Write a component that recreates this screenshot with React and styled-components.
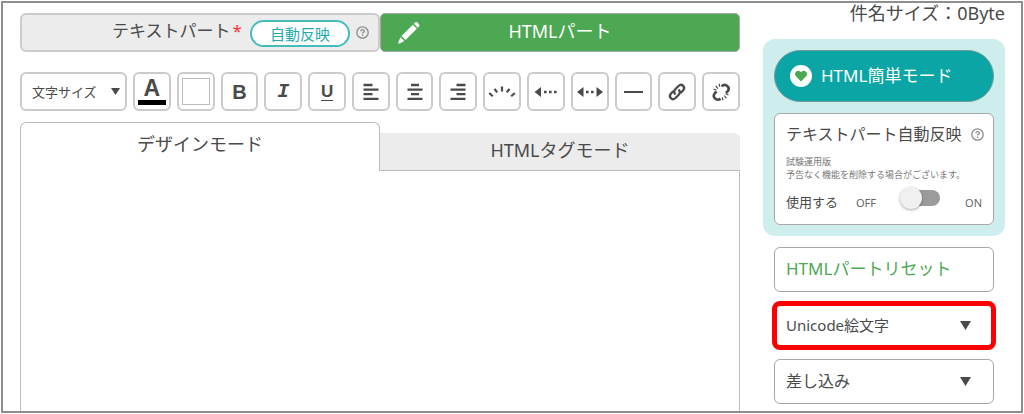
import React, { useState } from "react";
import styled, { createGlobalStyle } from "styled-components";
import { FaHeart } from "react-icons/fa";

const ink = "#4a4a4a";
const line = "#cbcbcb";
const darkLine = "#a8a8a8";
const teal = "#0ba5a5";
const green = "#4ca852";

const GlobalStyle = createGlobalStyle`
  *, *::before, *::after { box-sizing: border-box; }
  body {
    margin: 0;
    padding: 1px;
    background: #fff;
    color: ${ink};
    font-family: "Noto Sans", "Noto Sans CJK JP", sans-serif;
    font-size: 18px;
    line-height: 24px;
  }
  button, select { font: inherit; color: inherit; margin: 0; }
  button { cursor: pointer; }
  svg { display: block; }
`;

const Frame = styled.div`
  display: grid;
  grid-template-columns: minmax(0, 1fr) 242px;
  column-gap: 23px;
  padding: 0 16px 0 17px;
  border: 2px solid #8e8e8e;
`;

const Main = styled.main`
  display: flex;
  flex-direction: column;
  padding-top: 10px;
`;

const PartTabs = styled.div`
  display: grid;
  grid-template-columns: 1fr 1fr;
  height: 39px;
`;

const PartTab = styled.div`
  display: flex;
  align-items: center;
  justify-content: flex-end;
  padding: 0 9px;
  border: 2px solid ${line};
  border-radius: 6px;
  background: #ececec;
`;

const PlainButton = styled.button`
  padding: 0;
  border: 0;
  background: none;
`;

const PartName = styled(PlainButton)`
  padding-bottom: 3px;
  font-size: 17px;
`;

const Required = styled.span`
  margin-left: 2px;
  color: #f33;
`;

const Badge = styled.button`
  height: 27px;
  margin: 2px 6px 0 8px;
  padding: 0 18px;
  border: 2px solid #45bcbc;
  border-radius: 14px;
  background: #fff;
  color: #1fabab;
  font-size: 15px;
  line-height: 20px;
`;

const HelpButton = styled(PlainButton)`
  flex: none;
  color: #8c8c8c;
`;

const ActivePart = styled.button`
  display: grid;
  grid-template-columns: 24px 1fr 24px;
  align-items: center;
  padding: 0 16px;
  border: 1px solid ${darkLine};
  border-radius: 5px;
  background: ${green};
  color: #fff;
`;

const PartLabel = styled.span`
  padding-bottom: 3px;
`;

const Toolbar = styled.div`
  display: flex;
  gap: 6px;
  height: 39px;
  margin-top: 20px;
`;

const ToolButton = styled.button`
  display: flex;
  flex: 1 1 0;
  min-width: 0;
  align-items: center;
  justify-content: center;
  padding: 0;
  border: 2px solid ${line};
  border-radius: 6px;
  background: #fff;
`;

const BoldMark = styled.span`
  font: bold 20px/24px "Liberation Sans", sans-serif;
`;

const ItalicMark = styled.span`
  font: italic bold 20px/24px "Liberation Mono", monospace;
`;

const UnderlineMark = styled.span`
  width: 12px;
  border-bottom: 1px solid ${ink};
  font: bold 17px/17px "Liberation Sans", sans-serif;
`;

const InkMark = styled.span`
  width: 28px;
  margin-bottom: 1px;
  border-bottom: 5px solid #000;
  font: bold 23px/23px "Liberation Sans", sans-serif;
`;

const Swatch = styled.span`
  width: 28px;
  height: 27px;
  border: 1px solid #bcbcbc;
`;

const SelectBox = styled.div`
  display: grid;
  align-items: center;
  width: ${(p) => p.$width};
  height: ${(p) => p.$height};
  border: ${(p) => (p.$soft ? `2px solid ${line}` : `1px solid ${darkLine}`)};
  border-radius: 6px;
  background: #fff;
  outline: ${(p) => (p.$marked ? "5px solid #f00" : "none")};
  outline-offset: -3px;

  select {
    grid-area: 1 / 1;
    width: 100%;
    height: 100%;
    padding: 0 0 ${(p) => (p.$soft ? "0 10px" : "2px 11px")};
    border: 0;
    background: none;
    appearance: none;
    font-size: ${(p) => p.$size};
  }
  svg {
    grid-area: 1 / 1;
    justify-self: end;
    margin-right: ${(p) => (p.$soft ? "5px" : "22px")};
    pointer-events: none;
  }
`;

const ModeTabs = styled.div`
  display: grid;
  grid-template-columns: 1fr 1fr;
  align-items: end;
  margin-top: 11px;
`;

const ModeTab = styled.button`
  height: ${(p) => (p.$active ? "49px" : "38px")};
  padding: ${(p) => (p.$active ? "0 0 6px" : "0 0 4px")};
  border: 1px solid #bcbcbc;
  border-width: ${(p) => (p.$active ? "1px 1px 0" : "0 0 1px")};
  border-radius: ${(p) => (p.$active ? "6px 6px 0 0" : "0 6px 0 0")};
  background: ${(p) => (p.$active ? "#fff" : "#ececec")};
`;

const Editor = styled.div`
  flex: 1;
  min-height: 200px;
  border: solid #bcbcbc;
  border-width: 0 1px;
  outline: none;
`;

const Sidebar = styled.aside`
  padding-bottom: 7px;
`;

const SubjectSize = styled.p`
  margin: 0 0 16px;
  line-height: 20px;
  text-align: right;
  white-space: nowrap;
`;

const EasyPanel = styled.section`
  display: grid;
  gap: 11px;
  padding: 11px;
  border-radius: 12px;
  background: #cdeeec;
`;

const EasyButton = styled.button`
  display: flex;
  align-items: center;
  gap: 9px;
  height: 52px;
  padding: 0 15px;
  border: 1px solid #6f9c9c;
  border-radius: 26px;
  background: ${teal};
  color: #fff;
  font-size: 17px;
`;

const HeartDisc = styled.span`
  display: grid;
  place-items: center;
  width: 22px;
  height: 22px;
  border-radius: 50%;
  background: #fff;
  color: ${green};
`;

const ReflectCard = styled.div`
  height: 112px;
  padding: 8px 9px 0 11px;
  border: 1px solid ${darkLine};
  border-radius: 6px;
  background: #fff;
`;

const CardHeading = styled.div`
  display: flex;
  align-items: center;
  justify-content: space-between;
  font-size: 16px;
  white-space: nowrap;
`;

const Note = styled.p`
  margin: 9px 0 0;
  color: #777;
  font-size: 9px;
  line-height: 13px;
  white-space: nowrap;
`;

const SwitchRow = styled.label`
  display: flex;
  align-items: center;
  margin-top: 9px;
  font-size: 13px;
  line-height: 20px;
`;

const StateText = styled.span`
  margin-left: ${(p) => (p.$last ? "auto" : "18px")};
  padding-top: 2px;
  padding-right: ${(p) => (p.$last ? "2px" : "0")};
  color: #666;
  font-size: 11px;
`;

const Switch = styled.input`
  appearance: none;
  display: flex;
  align-items: center;
  width: 40px;
  height: 16px;
  margin: 0 0 8px 24px;
  border-radius: 8px;
  background: linear-gradient(#9b9b9b, #9b9b9b) right / 32px 16px no-repeat;
  cursor: pointer;

  &::before {
    content: "";
    width: 22px;
    height: 22px;
    flex: none;
    border-radius: 50%;
    background: #f0f0f0;
    box-shadow: 0 1px 3px rgba(0, 0, 0, 0.35);
  }
  &:checked { justify-content: flex-end; }
`;

const SideActions = styled.div`
  display: grid;
  gap: 11px;
  padding: 11px 11px 0;
`;

const ResetButton = styled.button`
  height: 45px;
  padding: 0 11px 2px;
  border: 1px solid ${darkLine};
  border-radius: 6px;
  background: #fff;
  color: ${green};
  font-size: 17px;
  text-align: left;
`;

const Help = () => (
  <HelpButton type="button" aria-label="ヘルプ">
    <svg width="13" height="13" viewBox="0 0 13 13" fill="none" stroke="currentColor" strokeWidth="1.3">
      <circle cx="6.5" cy="6.5" r="5.7" />
      <path d="M4.8 5.2c0-2.2 3.5-2.2 3.5-.1 0 1.2-1.7 1.3-1.7 2.5M6.6 8.6v1.3" />
    </svg>
  </HelpButton>
);

const Caret = ({ size }) => (
  <svg width={size} height={size - 2} viewBox="0 0 10 8" preserveAspectRatio="none" fill={ink}>
    <path d="M0 0h10L5 8z" />
  </svg>
);

const Pencil = () => (
  <svg width="24" height="24" viewBox="0 0 24 24" fill="#fff">
    <path d="M4.500 15 15.800 3.700l4 4L8.500 19z" />
    <path d="M3.500 16.200 7.300 20l-4.500 2.500c-1 .5-2-.5-1.500-1.500z" />
    <path d="m16.800 2.700 1-1a2 2 0 0 1 2.800 0l1.200 1.200a2 2 0 0 1 0 2.800l-1 1z" />
  </svg>
);

const Strokes = ({ d, width = 2, children }) => (
  <svg width="30" height="24" viewBox="0 0 30 24" fill="none" stroke={ink} strokeWidth={width}>
    <path d={d} />
    {children}
  </svg>
);

const tools = [
  ["文字色", <InkMark>A</InkMark>],
  ["背景色", <Swatch />],
  ["太字", <BoldMark>B</BoldMark>],
  ["斜体", <ItalicMark>I</ItalicMark>],
  ["下線", <UnderlineMark>U</UnderlineMark>],
  ["左揃え", <Strokes width={2.3} d="M7.500 5h9M7.500 9.600h15M7.500 14.200h9M7.500 18.800h15" />],
  ["中央揃え", <Strokes width={2.3} d="M11 5h8M7.500 9.600h15M11 14.200h8M7.500 18.800h15" />],
  ["右揃え", <Strokes width={2.3} d="M13.500 5h9M7.500 9.600h15M13.500 14.200h9M7.500 18.800h15" />],
  ["点滅", <Strokes width={2.2} d="M2.200 13l3.600 3.200M7.500 8.800l2.700 3.600M15 6.500v5M22.500 8.800l-2.700 3.600M27.800 13l-3.600 3.200" />],
  ["スクロール", <Strokes width={2.4} d="M13 12h2.600M18 12h2.600M23 12h2.600"><path d="M3.500 12l6.500-5v10z" fill={ink} stroke="none" /></Strokes>],
  ["往復スクロール", <Strokes width={2.4} d="M11 12h2.600M16 12h2.600"><path d="M2 12l6.500-5v10zM28 12l-6.500-5v10z" fill={ink} stroke="none" /></Strokes>],
  ["水平線", <Strokes d="M6 12h19" />],
  ["リンク", (
    <Strokes width={2.3} d="M13.500 14.500c-2-2-1.500-4 0-5.500l3-3c3.500-3 7.500 1 4.500 4.500l-2.500 2.500M16.500 9.500c2 2 1.500 4 0 5.500l-3 3c-3.500 3-7.500-1-4.500-4.500l2.500-2.500" />
  )],
  ["リンク解除", (
    <Strokes width={2.6} d="M15.500 6.500c3.500-4 9 .5 6.500 4.500l-2 2M10.500 11.500l-1.500 1.500c-3.500 4 2 9 5.500 5.500">
      <path strokeWidth="1.200" d="M7.500 9l3 1.200M9.800 5.800l2 2.800M13.200 3.800l.3 3M16.500 17.200l.3 3M18.300 15.500l2 2.800M19.500 13.800l3 1.200" />
    </Strokes>
  )],
];

export default function App() {
  const [on, setOn] = useState(false);
  return (
    <>
      <GlobalStyle />
      <Frame>
        <Main>
          <PartTabs>
            <PartTab>
              <PartName type="button">テキストパート<Required>*</Required></PartName>
              <Badge type="button">自動反映</Badge>
              <Help />
            </PartTab>
            <ActivePart type="button"><Pencil /><PartLabel>HTMLパート</PartLabel></ActivePart>
          </PartTabs>
          <Toolbar role="toolbar">
            <SelectBox $soft $width="107px" $height="39px" $size="13px">
              <select aria-label="文字サイズ"><option>文字サイズ</option></select>
              <Caret size={9} />
            </SelectBox>
            {tools.map(([name, mark]) => (
              <ToolButton key={name} type="button" aria-label={name}>{mark}</ToolButton>
            ))}
          </Toolbar>
          <ModeTabs>
            <ModeTab type="button" $active>デザインモード</ModeTab>
            <ModeTab type="button">HTMLタグモード</ModeTab>
          </ModeTabs>
          <Editor contentEditable suppressContentEditableWarning role="textbox" aria-label="本文" />
        </Main>
        <Sidebar>
          <SubjectSize>件名サイズ：0Byte</SubjectSize>
          <EasyPanel>
            <EasyButton type="button">
              <HeartDisc><FaHeart size={12} /></HeartDisc>
              HTML簡単モード
            </EasyButton>
            <ReflectCard>
              <CardHeading>テキストパート自動反映<Help /></CardHeading>
              <Note>試験運用版<br />予告なく機能を削除する場合がございます。</Note>
              <SwitchRow>
                使用する
                <StateText>OFF</StateText>
                <Switch type="checkbox" role="switch" checked={on} onChange={(e) => setOn(e.target.checked)} />
                <StateText $last>ON</StateText>
              </SwitchRow>
            </ReflectCard>
          </EasyPanel>
          <SideActions>
            <ResetButton type="button">HTMLパートリセット</ResetButton>
            <SelectBox $marked $width="100%" $height="45px" $size="15px">
              <select aria-label="Unicode絵文字"><option>Unicode絵文字</option></select>
              <Caret size={11} />
            </SelectBox>
            <SelectBox $width="100%" $height="45px" $size="16px">
              <select aria-label="差し込み"><option>差し込み</option></select>
              <Caret size={11} />
            </SelectBox>
          </SideActions>
        </Sidebar>
      </Frame>
    </>
  );
}
